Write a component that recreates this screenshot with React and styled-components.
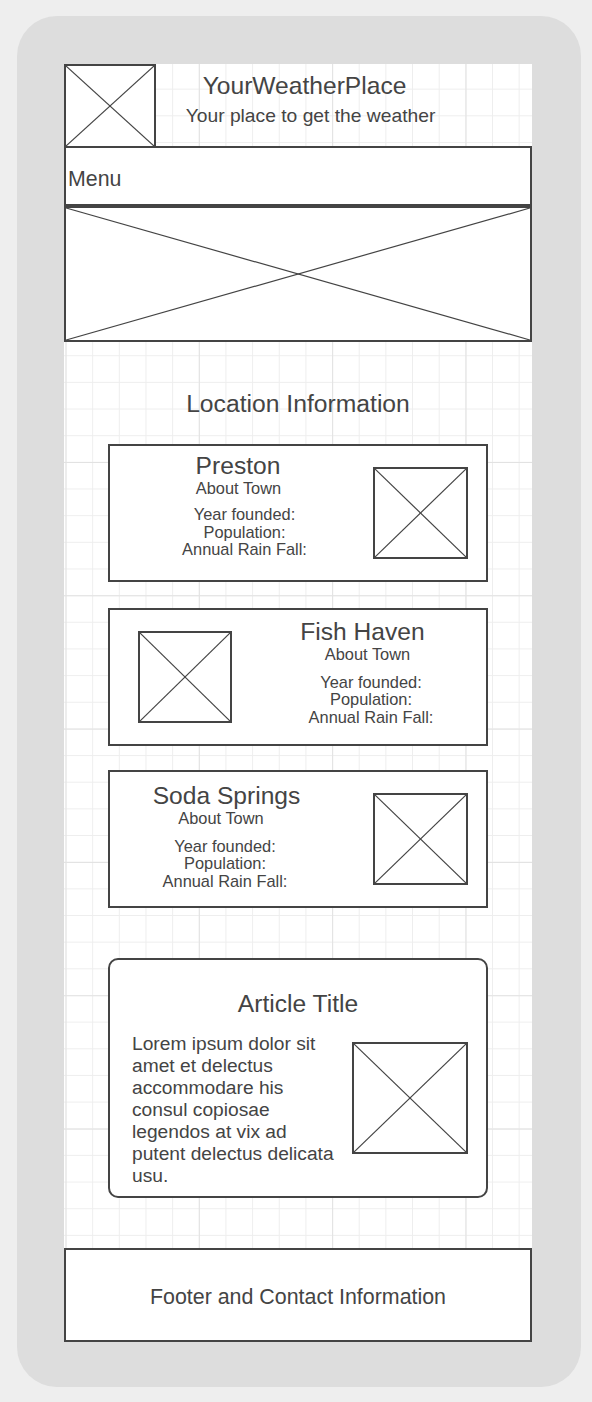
import React from "react";
import styled, { createGlobalStyle, css } from "styled-components";

const INK = "#444444";

const GlobalStyle = createGlobalStyle`
  html, body {
    margin: 0;
    padding: 0;
    background: #eeeeee;
  }
  body {
    font-family: "Liberation Sans", Arial, Helvetica, sans-serif;
    color: ${INK};
  }
  * { box-sizing: border-box; }
`;

const shift = ({ $dx = 0 }) =>
  $dx >= 0
    ? css`margin-left: ${2 * $dx}px;`
    : css`margin-right: ${-2 * $dx}px;`;

const Frame = styled.div`
  width: 564px;
  margin: 16px 0 0 17px;
  padding: 48px 49px 45px 47px;
  background: #dddddd;
  border-radius: 40px;
`;

const Canvas = styled.main`
  display: flex;
  flex-direction: column;
  width: 468px;
  background-color: #ffffff;
  background-image:
    linear-gradient(to right, #e2e2e2 1px, transparent 1px),
    linear-gradient(to bottom, #e2e2e2 1px, transparent 1px),
    linear-gradient(to right, #eeeeee 1px, transparent 1px),
    linear-gradient(to bottom, #eeeeee 1px, transparent 1px);
  background-size:
    133.333px 133.333px,
    133.333px 133.333px,
    26.667px 26.667px,
    26.667px 26.667px;
  background-position:
    1.5px 0,
    0 -2px,
    1.5px 0,
    0 -2px;
`;

const Header = styled.header`
  display: flex;
  height: 84px;
`;

const Placeholder = styled.div`
  flex-shrink: 0;
  width: ${(p) => p.$w}px;
  height: ${(p) => p.$h}px;
  border: 2px solid ${INK};
  background: #ffffff;
  ${(p) => p.$ml !== undefined && css`margin-left: ${p.$ml};`}
  ${(p) => p.$mt !== undefined && css`margin-top: ${p.$mt}px;`}
  svg {
    display: block;
    width: 100%;
    height: 100%;
  }
`;

const TitleBlock = styled.div`
  display: flex;
  flex-direction: column;
  align-items: center;
  width: 297px;
  padding-top: 8px;
`;

const SiteTitle = styled.h1`
  margin: 0;
  font-size: 24.6px;
  line-height: 28px;
  font-weight: normal;
  white-space: nowrap;
`;

const Tagline = styled.p`
  margin: 5px 0 0 12px;
  font-size: 19.25px;
  line-height: 22px;
  white-space: nowrap;
`;

const Menu = styled.nav`
  display: flex;
  align-items: center;
  height: 60px;
  margin-top: -2px;
  padding: 5px 0 0 2px;
  border: 2px solid ${INK};
  background: #ffffff;
  font-size: 21.33px;
  line-height: 24px;
`;

const SectionHeading = styled.h2`
  margin: 48px 0 0;
  font-size: 24.7px;
  line-height: 28px;
  font-weight: normal;
  text-align: center;
`;

const TownCard = styled.section`
  display: flex;
  align-items: center;
  width: 380px;
  height: 138px;
  margin: ${(p) => p.$mt}px 0 0 44px;
  padding: 0 ${(p) => p.$pr}px 0 0;
  border: 2px solid ${INK};
  background: #ffffff;
`;

const TextCol = styled.div`
  align-self: flex-start;
  display: flex;
  flex-direction: column;
  align-items: center;
  width: ${(p) => p.$w}px;
  margin-left: ${(p) => p.$ml}px;
  padding-top: ${(p) => p.$pt}px;
`;

const TownName = styled.h3`
  margin: 0;
  font-size: 24.6px;
  line-height: 24px;
  font-weight: normal;
  white-space: nowrap;
`;

const About = styled.p`
  margin: 1px 0 0;
  font-size: 16.4px;
  line-height: 18px;
  white-space: nowrap;
  ${shift}
`;

const Details = styled.p`
  margin: ${(p) => p.$mt}px 0 0;
  font-size: 16.4px;
  line-height: 17.5px;
  text-align: center;
  white-space: nowrap;
  ${shift}
`;

const Article = styled.article`
  display: flex;
  flex-direction: column;
  width: 380px;
  height: 240px;
  margin: 50px 0 0 44px;
  padding: 0 18px;
  border: 2px solid ${INK};
  border-radius: 10px;
  background: #ffffff;
`;

const ArticleTitle = styled.h2`
  margin: 29.5px 0 0;
  font-size: 24.6px;
  line-height: 28px;
  font-weight: normal;
  text-align: center;
`;

const ArticleBody = styled.div`
  display: flex;
  align-items: flex-start;
  justify-content: space-between;
  margin-top: 15px;
`;

const BodyText = styled.p`
  width: 207px;
  margin: 0 0 0 4px;
  font-size: 19.2px;
  line-height: 22px;
`;

const Footer = styled.footer`
  display: flex;
  align-items: center;
  justify-content: center;
  height: 94px;
  margin-top: 50px;
  padding-top: 3px;
  border: 2px solid ${INK};
  background: #ffffff;
  font-size: 21.4px;
  line-height: 24px;
`;

function Cross() {
  return (
    <svg viewBox="0 0 100 100" preserveAspectRatio="none" aria-hidden="true">
      <line x1="0" y1="0" x2="100" y2="100" stroke={INK} strokeWidth="1.2" vectorEffect="non-scaling-stroke" />
      <line x1="100" y1="0" x2="0" y2="100" stroke={INK} strokeWidth="1.2" vectorEffect="non-scaling-stroke" />
    </svg>
  );
}

function ImageBox(props) {
  return (
    <Placeholder {...props}>
      <Cross />
    </Placeholder>
  );
}

function TownText({ name, col, aboutDx, detailsDx, detailsMt }) {
  return (
    <TextCol $w={col.w} $ml={col.ml} $pt={col.pt}>
      <TownName>{name}</TownName>
      <About $dx={aboutDx}>About Town</About>
      <Details $dx={detailsDx} $mt={detailsMt}>
        Year founded:
        <br />
        Population:
        <br />
        Annual Rain Fall:
      </Details>
    </TextCol>
  );
}

export default function App() {
  return (
    <>
      <GlobalStyle />
      <Frame>
        <Canvas>
          <Header>
            <ImageBox $w={92} $h={84} />
            <TitleBlock>
              <SiteTitle>YourWeatherPlace</SiteTitle>
              <Tagline>Your place to get the weather</Tagline>
            </TitleBlock>
          </Header>
          <Menu>Menu</Menu>
          <ImageBox $w={468} $h={136} />

          <SectionHeading>Location Information</SectionHeading>

          <TownCard $mt={26} $pr={18}>
            <TownText
              name="Preston"
              col={{ w: 256, ml: 0, pt: 8 }}
              aboutDx={0.5}
              detailsDx={6.5}
              detailsMt={9}
            />
            <ImageBox $w={95} $h={92} $ml="auto" />
          </TownCard>

          <TownCard $mt={26} $pr={0}>
            <ImageBox $w={94} $h={92} $ml="28px" />
            <TownText
              name="Fish Haven"
              col={{ w: 200, ml: 30.5, pt: 10 }}
              aboutDx={5}
              detailsDx={8.5}
              detailsMt={10.5}
            />
          </TownCard>

          <TownCard $mt={24} $pr={18}>
            <TownText
              name="Soda Springs"
              col={{ w: 233, ml: 0, pt: 12 }}
              aboutDx={-5.5}
              detailsDx={-1.5}
              detailsMt={10.5}
            />
            <ImageBox $w={95} $h={92} $ml="auto" />
          </TownCard>

          <Article>
            <ArticleTitle>Article Title</ArticleTitle>
            <ArticleBody>
              <BodyText>
                Lorem ipsum dolor sit amet et delectus accommodare his consul
                copiosae legendos at vix ad putent delectus delicata usu.
              </BodyText>
              <ImageBox $w={116} $h={112} $mt={9.5} />
            </ArticleBody>
          </Article>

          <Footer>Footer and Contact Information</Footer>
        </Canvas>
      </Frame>
    </>
  );
}
